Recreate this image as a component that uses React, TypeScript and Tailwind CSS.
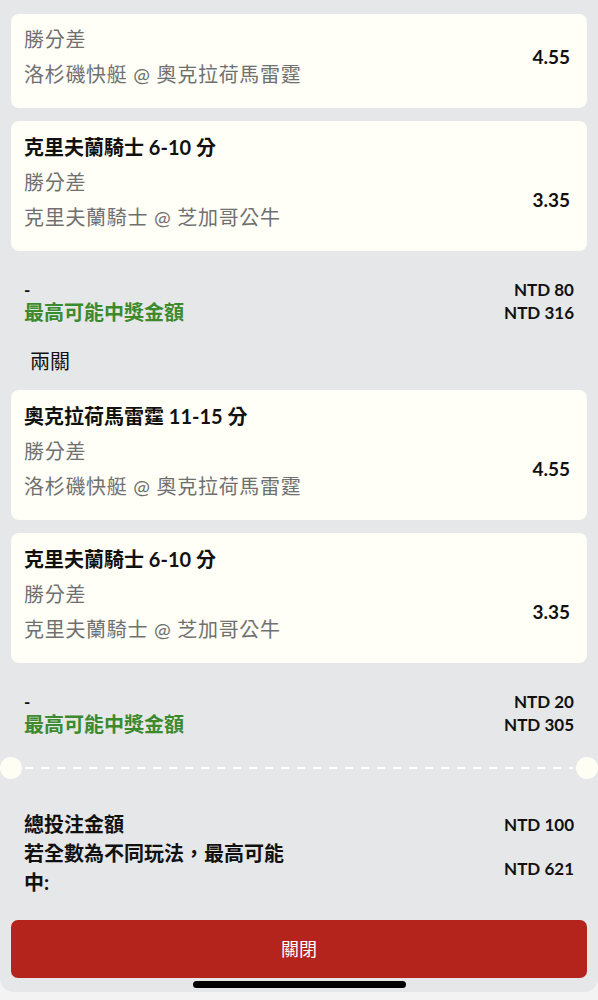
import React from "react";

type Leg = {
  title?: string;
  market: string;
  matchup: string;
  odds: string;
};

const LegCard = ({ leg, className = "" }: { leg: Leg; className?: string }) => {
  return (
    <div className={`rounded-[8px] bg-[#fffef7] pl-[13px] pr-[17px] pt-[8px] pb-[16px] ${className}`}>
      {leg.title && (
        <div className="text-[20px] leading-[36px] font-bold text-[#111]">{leg.title}</div>
      )}
      <div className="flex items-center">
        <div className="flex-1 text-[20px] leading-[35px] tracking-[0.7px] text-[#707070]">
          <div>{leg.market}</div>
          <div>{leg.matchup}</div>
        </div>
        <div className="text-[19px] font-bold text-[#111]">{leg.odds}</div>
      </div>
    </div>
  );
};

const Summary = ({ stake, payout, className = "" }: { stake: string; payout: string; className?: string }) => {
  return (
    <div className={`flex justify-between px-[13px] leading-[23px] ${className}`}>
      <div>
        <div className="text-[17px] font-bold text-[#111]">-</div>
        <div className="text-[20px] font-bold text-[#3b8a2e]">最高可能中獎金額</div>
      </div>
      <div className="text-right text-[17px] font-bold text-[#111]">
        <div>{stake}</div>
        <div>{payout}</div>
      </div>
    </div>
  );
};

const okc: Leg = {
  title: "奧克拉荷馬雷霆 11-15 分",
  market: "勝分差",
  matchup: "洛杉磯快艇 @ 奧克拉荷馬雷霆",
  odds: "4.55",
};

const cle: Leg = {
  title: "克里夫蘭騎士 6-10 分",
  market: "勝分差",
  matchup: "克里夫蘭騎士 @ 芝加哥公牛",
  odds: "3.35",
};

export default function App() {
  return (
    <div className="relative h-[1000px] overflow-hidden bg-[#f3f3f4] font-[Lato,'Noto_Sans_CJK_TC',sans-serif]">
      <div className="h-[992px] rounded-b-[14px] bg-[#e6e7e9] px-[11px] pt-[14px]">
        <LegCard leg={{ ...okc, title: undefined }} />
        <LegCard leg={cle} className="mt-[13px]" />
        <Summary stake="NTD 80" payout="NTD 316" className="mt-[27px]" />

        <div className="mt-[23px] pl-[19px] text-[20px] leading-[28px] text-[#111]">兩關</div>

        <LegCard leg={okc} className="mt-[15px]" />
        <LegCard leg={cle} className="mt-[13px]" />
        <Summary stake="NTD 20" payout="NTD 305" className="mt-[27px]" />

        <div className="-mx-[11px] mt-[20px] flex h-[24px] items-center">
          <div className="h-[22px] w-[22px] rounded-full bg-[#fffef5]" />
          <div className="mx-[3px] h-[2px] flex-1 bg-[repeating-linear-gradient(90deg,#ffffff_0_8px,transparent_8px_16px)]" />
          <div className="h-[22px] w-[22px] rounded-full bg-[#fffef5]" />
        </div>

        <div className="mt-[30px] px-[13px] text-[20px] font-bold leading-[29px] text-[#111]">
          <div className="flex items-center justify-between">
            <div>總投注金額</div>
            <div className="text-[17px]">NTD 100</div>
          </div>
          <div className="flex items-center justify-between">
            <div className="w-[274px]">若全數為不同玩法，最高可能中:</div>
            <div className="text-[17px]">NTD 621</div>
          </div>
        </div>

        <button className="mt-[23px] flex h-[58px] w-full items-center justify-center rounded-[7px] bg-[#b4241c] text-[18px] text-white">
          關閉
        </button>
      </div>

      <div className="absolute left-[193px] top-[981px] h-[7px] w-[213px] rounded-full bg-black" />
    </div>
  );
}
